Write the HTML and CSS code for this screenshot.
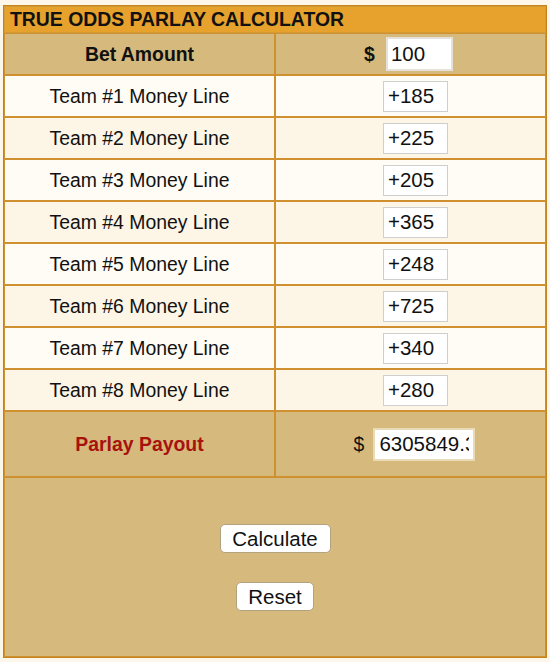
FILE: index.html
```html
<!DOCTYPE html>
<html lang="en">
<head>
<meta charset="utf-8">
<title>True Odds Parlay Calculator</title>
<link rel="stylesheet" href="styles.css">
</head>
<body>
<div class="calc">
  <div class="title">TRUE ODDS PARLAY CALCULATOR</div>
  <div class="grid">
    <div class="cell tan label-bold">Bet Amount</div>
    <div class="cell tan bet"><span class="dollar-bold">$</span><input class="inp inp-bet" type="text" value="100"></div>

    <div class="cell light">Team #1 Money Line</div>
    <div class="cell light val"><input class="inp inp-team" type="text" value="+185"></div>

    <div class="cell cream">Team #2 Money Line</div>
    <div class="cell cream val"><input class="inp inp-team" type="text" value="+225"></div>

    <div class="cell light">Team #3 Money Line</div>
    <div class="cell light val"><input class="inp inp-team" type="text" value="+205"></div>

    <div class="cell cream">Team #4 Money Line</div>
    <div class="cell cream val"><input class="inp inp-team" type="text" value="+365"></div>

    <div class="cell light">Team #5 Money Line</div>
    <div class="cell light val"><input class="inp inp-team" type="text" value="+248"></div>

    <div class="cell cream">Team #6 Money Line</div>
    <div class="cell cream val"><input class="inp inp-team" type="text" value="+725"></div>

    <div class="cell light">Team #7 Money Line</div>
    <div class="cell light val"><input class="inp inp-team" type="text" value="+340"></div>

    <div class="cell cream">Team #8 Money Line</div>
    <div class="cell cream val"><input class="inp inp-team" type="text" value="+280"></div>

    <div class="cell tan payout-label">Parlay Payout</div>
    <div class="cell tan payout"><span class="dollar">$</span><input class="inp inp-pay" type="text" value="6305849.3"></div>

    <div class="cell tan actions">
      <button class="btn btn-calc" type="button">Calculate</button>
      <button class="btn btn-reset" type="button">Reset</button>
    </div>
  </div>
</div>
</body>
</html>
```

FILE: styles.css
```css
* { box-sizing: border-box; }

html, body {
  margin: 0;
  padding: 0;
  background: #fdf6ea;
  font-family: "Liberation Sans", Arial, Helvetica, sans-serif;
  color: #111;
}

body {
  padding: 5px 0 0 3px;
  height: 662px;
  overflow: hidden;
}

.calc {
  width: 544px;
  border: 1px solid #c4841c;
  background: #fdf6ea;
}

.title {
  height: 27px;
  border: 1px solid #d39a35;
  background: #e6a22c;
  font-weight: bold;
  font-size: 19.4px;
  line-height: 25px;
  padding-left: 5px;
  color: #111;
  white-space: nowrap;
  overflow: hidden;
}

.grid {
  display: grid;
  grid-template-columns: 271px 271px;
  grid-template-rows: repeat(9, 42px) 66px 180px;
}

.cell {
  border: 1px solid #cf9130;
  display: flex;
  align-items: center;
  justify-content: center;
  font-size: 19.4px;
  white-space: nowrap;
}

.tan { background: #d6b97c; }
.light { background: #fffcf6; }
.cream { background: #fdf5e6; }

.label-bold { font-weight: bold; }

.bet { padding-right: 4px; }
.dollar-bold { font-weight: bold; margin-right: 11px; }

.val { padding-left: 10px; }

.payout-label {
  color: #a8120d;
  font-weight: bold;
}

.payout { padding-left: 8px; }
.dollar { margin-right: 9px; }

.inp {
  font-family: "Liberation Sans", Arial, Helvetica, sans-serif;
  font-size: 20.5px;
  color: #111;
  background: #fff;
  border: 1px solid #cfcfcf;
  padding: 0 4px;
  margin: 0;
  outline: none;
}

.inp-bet {
  width: 67px;
  height: 34px;
  border: 2px solid #e4e0da;
  padding-left: 3px;
}

.inp-team {
  width: 65px;
  height: 31px;
}

.inp-pay {
  width: 102px;
  height: 33px;
  border: 2px solid #eadbb8;
  padding-left: 4px;
}

.actions {
  grid-column: 1 / span 2;
  flex-direction: column;
  justify-content: flex-start;
  padding-top: 46px;
  gap: 29px;
}

.btn {
  font-family: "Liberation Sans", Arial, Helvetica, sans-serif;
  font-size: 20.5px;
  color: #111;
  background: #fff;
  border: 1px solid #b3a27e;
  border-radius: 5px;
  height: 29px;
  padding: 0;
  margin: 0;
  line-height: 27px;
}

.btn-calc { width: 111px; }
.btn-reset { width: 78px; }
```
